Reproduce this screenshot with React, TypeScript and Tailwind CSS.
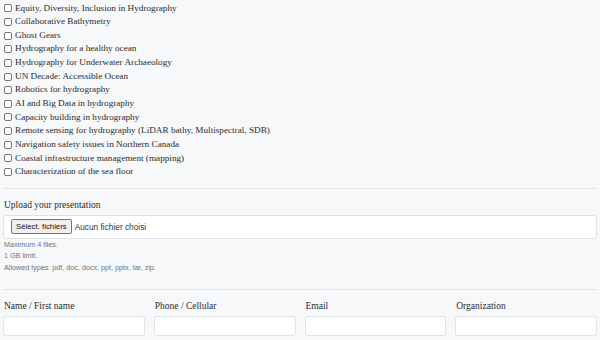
import React from "react";

const topics = [
  "Equity, Diversity, Inclusion in Hydrography",
  "Collaborative Bathymetry",
  "Ghost Gears",
  "Hydrography for a healthy ocean",
  "Hydrography for Underwater Archaeology",
  "UN Decade: Accessible Ocean",
  "Robotics for hydrography",
  "AI and Big Data in hydrography",
  "Capacity building in hydrography",
  "Remote sensing for hydrography (LiDAR bathy, Multispectral, SDB)",
  "Navigation safety issues in Northern Canada",
  "Coastal infrastructure management (mapping)",
  "Characterization of the sea floor",
];

const serif = "font-['Liberation_Serif',serif]";

export default function App() {
  return (
    <div className="w-[600px] h-[340px] overflow-hidden bg-[#f7f8fa] text-[#2b2b2b]">
      <div className={`flex flex-col pt-[1.5px] pl-[4px] ${serif}`}>
        {topics.map((t) => (
          <div key={t} className="flex items-center h-[13.65px] gap-[3px]">
            <span className="w-[8px] h-[8px] border border-[#767676] rounded-[2px] bg-white" />
            <span className="text-[9.2px] leading-[13.65px]">{t}</span>
          </div>
        ))}
      </div>
      <div className="mt-[9px] mx-[3px] h-[1px] bg-[#e3e5e8]" />
      <div className={`mt-[10px] pl-[4px] text-[9.5px] leading-[12px] ${serif}`}>
        Upload your presentation
      </div>
      <div className="mt-[4px] mx-[3px] h-[24px] bg-white border border-[#dfe2e6] rounded-[3px] flex items-center pl-[7px] font-['Liberation_Sans',sans-serif] text-[8.3px]">
        <span className="h-[15px] px-[4px] flex items-center bg-[#efefef] border border-[#767676] rounded-[2px] text-[#111] text-[7.8px] whitespace-nowrap">
          Sélect. fichiers
        </span>
        <span className="ml-[3px] text-[#333]">Aucun fichier choisi</span>
      </div>
      <div className="pl-[4px] font-['Liberation_Sans',sans-serif] text-[7.2px] leading-[11.6px] text-[#6c757d]">
        <div>Maximum 4 files.</div>
        <div>1 GB limit.</div>
        <div>Allowed types: pdf, doc, docx, ppt, pptx, tar, zip.</div>
      </div>
      <div className="mt-[15px] mx-[3px] h-[1px] bg-[#e3e5e8]" />
      <div className="mt-[10px] px-[3px] grid grid-cols-4 gap-x-[9px]">
        {["Name / First name", "Phone / Cellular", "Email", "Organization"].map((l) => (
          <div key={l} className="flex flex-col">
            <div className={`pl-[1px] text-[9.5px] leading-[12px] ${serif}`}>{l}</div>
            <div className="mt-[4px] h-[20px] bg-white border border-[#dfe2e6] rounded-[3px]" />
          </div>
        ))}
      </div>
    </div>
  );
}
